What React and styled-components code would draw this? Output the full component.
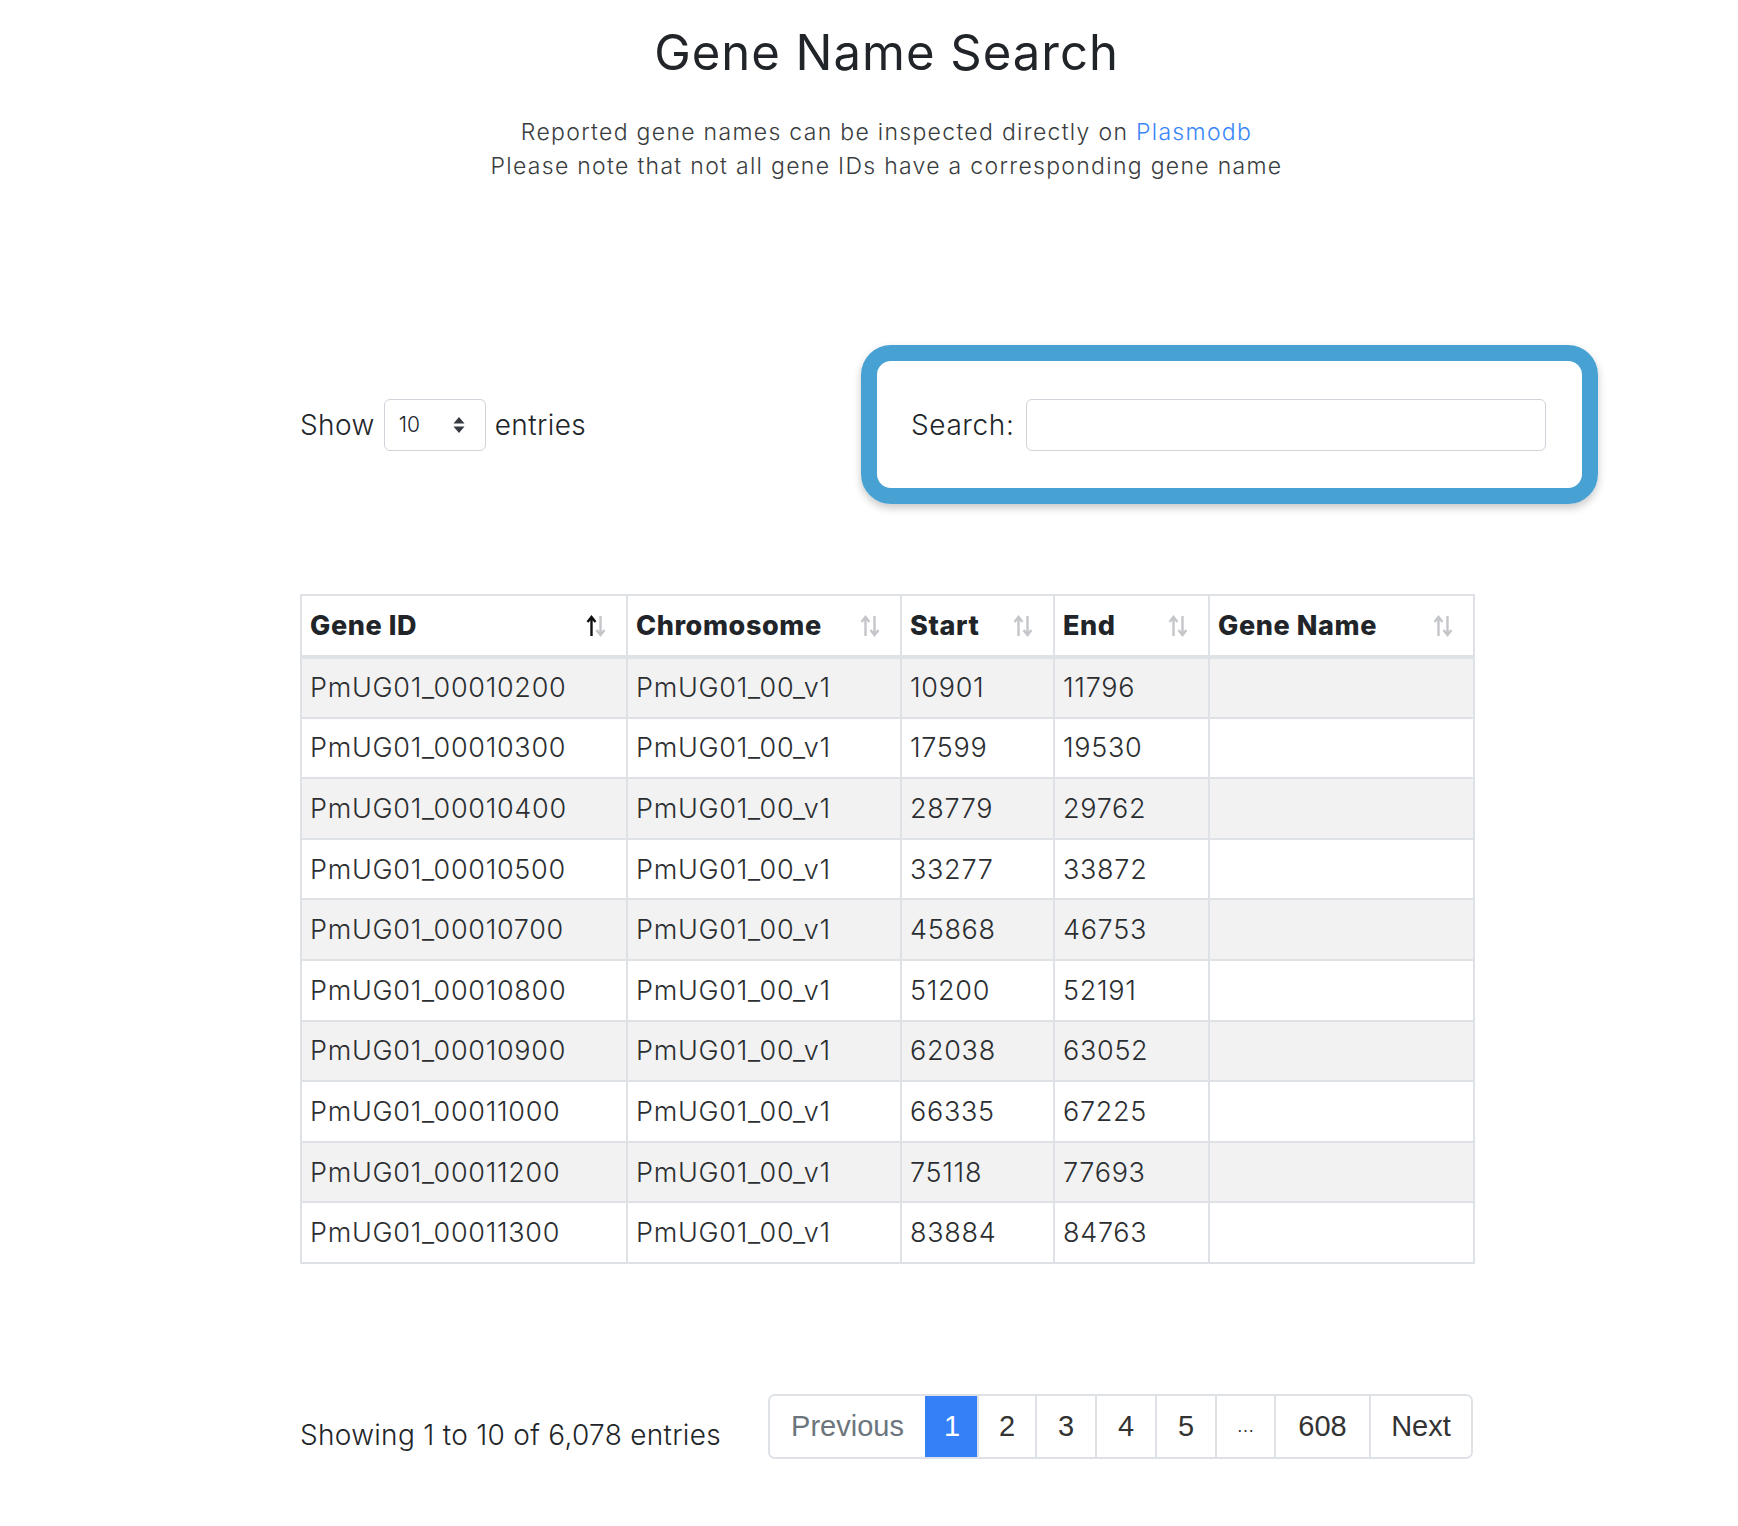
import React from "react";
import styled, { createGlobalStyle } from "styled-components";

const rows = [
  ["PmUG01_00010200", "PmUG01_00_v1", "10901", "11796"],
  ["PmUG01_00010300", "PmUG01_00_v1", "17599", "19530"],
  ["PmUG01_00010400", "PmUG01_00_v1", "28779", "29762"],
  ["PmUG01_00010500", "PmUG01_00_v1", "33277", "33872"],
  ["PmUG01_00010700", "PmUG01_00_v1", "45868", "46753"],
  ["PmUG01_00010800", "PmUG01_00_v1", "51200", "52191"],
  ["PmUG01_00010900", "PmUG01_00_v1", "62038", "63052"],
  ["PmUG01_00011000", "PmUG01_00_v1", "66335", "67225"],
  ["PmUG01_00011200", "PmUG01_00_v1", "75118", "77693"],
  ["PmUG01_00011300", "PmUG01_00_v1", "83884", "84763"],
];

const columns = [
  { label: "Gene ID", width: 326, active: true },
  { label: "Chromosome", width: 274 },
  { label: "Start", width: 153 },
  { label: "End", width: 155 },
  { label: "Gene Name", width: 265 },
];

const pages = [
  { label: "Previous", width: 155, muted: true },
  { label: "1", width: 52, active: true },
  { label: "2", width: 58 },
  { label: "3", width: 60 },
  { label: "4", width: 60 },
  { label: "5", width: 60 },
  { label: "…", width: 59, small: true },
  { label: "608", width: 95 },
  { label: "Next", width: 102 },
];

function SortIcon({ active }) {
  return (
    <SortSvg width="20" height="24" viewBox="0 0 20 24">
      <path d="M5.5 22V4M1.5 8l4-5 4 5" stroke={active ? "#111" : "#c4c6c9"} strokeWidth="2.4" fill="none" />
      <path d="M14.5 2v18M10.5 16l4 5 4-5" stroke="#c4c6c9" strokeWidth="2.4" fill="none" />
    </SortSvg>
  );
}

function App() {
  return (
    <>
      <GlobalStyle />
      <Page>
        <Header>
          <Title>Gene Name Search</Title>
          <Sub>
            Reported gene names can be inspected directly on <Link href="#">Plasmodb</Link>
            <br />
            Please note that not all gene IDs have a corresponding gene name
          </Sub>
        </Header>

        <Controls>
          <Length>
            Show
            <Select>
              <span>10</span>
              <svg width="12" height="18" viewBox="0 0 12 18">
                <path d="M6 1l5.5 6.5h-11z M6 17l5.5-6.5h-11z" fill="#343a40" />
              </svg>
            </Select>
            entries
          </Length>
          <SearchPanel>
            <SearchLabel>Search:</SearchLabel>
            <SearchInput type="search" />
          </SearchPanel>
        </Controls>

        <Table>
          <thead>
            <tr>
              {columns.map((c) => (
                <Th key={c.label} style={{ width: c.width }}>
                  <HeadInner>
                    {c.label}
                    <SortIcon active={c.active} />
                  </HeadInner>
                </Th>
              ))}
            </tr>
          </thead>
          <tbody>
            {rows.map((r, i) => (
              <Tr key={r[0]} $odd={i % 2 === 0}>
                {r.map((v, j) => (
                  <Td key={j}>{v}</Td>
                ))}
                <Td />
              </Tr>
            ))}
          </tbody>
        </Table>

        <Footer>
          <Info>Showing 1 to 10 of 6,078 entries</Info>
          <Pagination>
            {pages.map((p) => (
              <PageItem key={p.label} $w={p.width} $active={p.active} $muted={p.muted} $small={p.small}>
                {p.label}
              </PageItem>
            ))}
          </Pagination>
        </Footer>
      </Page>
    </>
  );
}

export default App;

const GlobalStyle = createGlobalStyle`
  body {
    margin: 0;
    background: #fff;
    color: #212529;
    font-family: "Inter", "Noto Sans", sans-serif;
  }
`;

const Page = styled.div`
  width: 1298px;
  padding: 24px 0 60px 300px;
`;

const Header = styled.div`
  width: 1173px;
  text-align: center;
`;

const Title = styled.h1`
  margin: 0;
  font-size: 49px;
  line-height: 58px;
  letter-spacing: 1px;
  font-weight: 400;
  color: #212529;
`;

const Sub = styled.p`
  margin: 33px 0 0;
  font-size: 23px;
  line-height: 34px;
  letter-spacing: 1.3px;
  font-weight: 300;
  color: #3a3d40;
`;

const Link = styled.a`
  color: #3b86f7;
  text-decoration: none;
`;

const Controls = styled.div`
  margin-top: 162px;
  display: flex;
  align-items: center;
  justify-content: space-between;
`;

const Length = styled.label`
  display: flex;
  align-items: center;
  gap: 9px;
  font-size: 28px;
  letter-spacing: 0.4px;
  font-weight: 300;
`;

const Select = styled.div`
  width: 102px;
  height: 52px;
  box-sizing: border-box;
  border: 1px solid #ced4da;
  border-radius: 6px;
  display: flex;
  align-items: center;
  justify-content: space-between;
  padding: 0 20px 0 14px;
  font-size: 21px;
  letter-spacing: 0;
  color: #212529;
`;

const SearchPanel = styled.div`
  width: 737px;
  height: 159px;
  box-sizing: border-box;
  border: 16px solid #47a1d3;
  border-radius: 30px;
  box-shadow: 0 4px 8px rgba(0, 0, 0, 0.22);
  display: flex;
  align-items: center;
  padding: 0 36px 0 34px;
  gap: 12px;
`;

const SearchLabel = styled.span`
  font-size: 28px;
  letter-spacing: 0.6px;
  font-weight: 300;
`;

const SearchInput = styled.input`
  flex: 1;
  height: 52px;
  box-sizing: border-box;
  border: 1px solid #ced4da;
  border-radius: 6px;
  outline: none;
`;

const Table = styled.table`
  margin-top: 90px;
  width: 1173px;
  border-collapse: collapse;
  border: 2px solid #dee2e6;
  font-size: 27px;
  letter-spacing: 0.7px;
  font-weight: 300;
  table-layout: fixed;
`;

const Th = styled.th`
  height: 62px;
  box-sizing: border-box;
  padding: 0 8px;
  border: 2px solid #dee2e6;
  border-bottom-width: 4px;
  text-align: left;
  font-weight: 800;
  letter-spacing: 0.6px;
  color: #212529;
`;

const HeadInner = styled.div`
  display: flex;
  align-items: center;
  justify-content: space-between;
  padding-right: 12px;
`;

const SortSvg = styled.svg`
  flex: none;
`;

const Tr = styled.tr`
  background: ${(p) => (p.$odd ? "#f2f2f2" : "#fff")};
`;

const Td = styled.td`
  height: 60.6px;
  box-sizing: border-box;
  padding: 0 8px;
  border: 2px solid #dee2e6;
  color: #2b2e31;
`;

const Footer = styled.div`
  width: 1173px;
  margin-top: 130px;
  display: flex;
  align-items: center;
  justify-content: space-between;
`;

const Info = styled.div`
  font-size: 28px;
  letter-spacing: 0.3px;
  font-weight: 300;
  padding-top: 17px;
`;

const Pagination = styled.div`
  display: flex;
  height: 65px;
  border: 2px solid #dee2e6;
  border-radius: 7px;
  box-sizing: border-box;
  overflow: hidden;
`;

const PageItem = styled.div`
  width: ${(p) => p.$w}px;
  box-sizing: border-box;
  display: flex;
  align-items: center;
  justify-content: center;
  border-left: 2px solid #dee2e6;
  &:first-child {
    border-left: none;
  }
  font-family: "Liberation Sans", Arial, sans-serif;
  font-size: ${(p) => (p.$small ? "18px" : "29px")};
  color: ${(p) => (p.$active ? "#fff" : p.$muted ? "#6c757d" : "#333")};
  background: ${(p) => (p.$active ? "#3580f6" : "#fff")};
  ${(p) => p.$active && "border-left-color: #3580f6; margin: -2px 0;"}
`;
